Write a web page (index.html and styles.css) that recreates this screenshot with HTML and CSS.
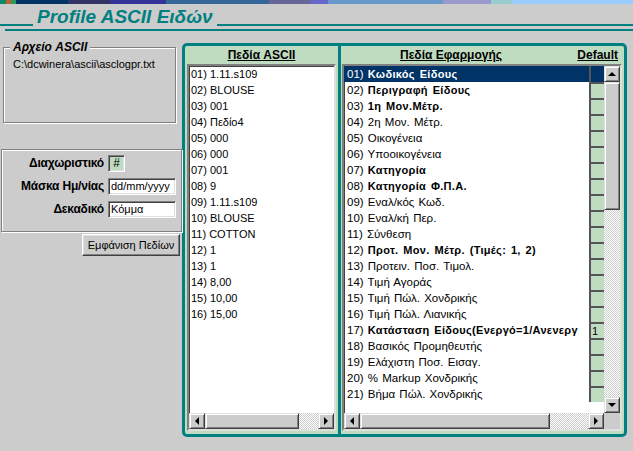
FILE: index.html
```html
<!DOCTYPE html>
<html lang="el">
<head>
<meta charset="utf-8">
<title>Profile ASCII Ειδών</title>
<link rel="stylesheet" href="styles.css">
</head>
<body>
<div class="titlebar"><span class="tb-icon"></span></div>
<header class="title-row">
  <span class="rule rule-left"></span>
  <h1 class="title">Profile ASCII Ειδών</h1>
  <span class="rule rule-right"></span>
</header>
<div class="title-rule2"></div>
<main class="main">
  <aside class="left-col">
    <section class="group group-file">
      <span class="group-legend">Αρχείο ASCII</span>
      <div class="file-path">C:\dcwinera\ascii\asclogpr.txt</div>
    </section>
    <section class="group group-opts">
      <span class="opt-label">Διαχωριστικό</span><div class="field field-sep">#</div>
      <span class="opt-label">Μάσκα Ημ/νίας</span><div class="field">dd/mm/yyyy</div>
      <span class="opt-label">Δεκαδικό</span><div class="field">Κόμμα</div>
    </section>
    <button class="btn">Εμφάνιση Πεδίων</button>
  </aside>
  <section class="panel">
    <div class="sub sub-ascii">
      <div class="sub-head head-center"><span class="hd">Πεδία ASCII</span></div>
      <div class="list list-ascii">
        <div class="rows">
          <div class="row">01) 1.11.s109</div>
          <div class="row">02) BLOUSE</div>
          <div class="row">03) 001</div>
          <div class="row">04) Πεδίο4</div>
          <div class="row">05) 000</div>
          <div class="row">06) 000</div>
          <div class="row">07) 001</div>
          <div class="row">08) 9</div>
          <div class="row">09) 1.11.s109</div>
          <div class="row">10) BLOUSE</div>
          <div class="row">11) COTTON</div>
          <div class="row">12) 1</div>
          <div class="row">13) 1</div>
          <div class="row">14) 8,00</div>
          <div class="row">15) 10,00</div>
          <div class="row">16) 15,00</div>
        </div>
        <div class="hscroll">
          <span class="sbtn"><i class="tri tri-left"></i></span>
          <span class="thumb thumb-ascii"></span>
          <span class="track"></span>
          <span class="sbtn"><i class="tri tri-right"></i></span>
        </div>
      </div>
    </div>
    <div class="divider"></div>
    <div class="sub sub-app">
      <div class="sub-head head-app"><span class="hd hd-app">Πεδία Εφαρμογής</span><span class="hd hd-default">Default</span></div>
      <div class="list list-app">
        <div class="rows">
          <div class="row sel">01) <b>Κωδικός Είδους</b></div>
          <div class="row">02) <b>Περιγραφή Είδους</b></div>
          <div class="row">03) <b>1η Μον.Μέτρ.</b></div>
          <div class="row">04) 2η Μον. Μέτρ.</div>
          <div class="row">05) Οικογένεια</div>
          <div class="row">06) Υποοικογένεια</div>
          <div class="row">07) <b>Κατηγορία</b></div>
          <div class="row">08) <b>Κατηγορία Φ.Π.Α.</b></div>
          <div class="row">09) Εναλ/κός Κωδ.</div>
          <div class="row">10) Εναλ/κή Περ.</div>
          <div class="row">11) Σύνθεση</div>
          <div class="row">12) <b>Προτ. Μον. Μέτρ. (Τιμές: 1, 2)</b></div>
          <div class="row">13) Προτειν. Ποσ. Τιμολ.</div>
          <div class="row">14) Τιμή Αγοράς</div>
          <div class="row">15) Τιμή Πώλ. Χονδρικής</div>
          <div class="row">16) Τιμή Πώλ. Λιανικής</div>
          <div class="row">17) <b>Κατάσταση Είδους(Ενεργό=1/Ανενεργ</b></div>
          <div class="row">18) Βασικός Προμηθευτής</div>
          <div class="row">19) Ελάχιστη Ποσ. Εισαγ.</div>
          <div class="row">20) % Markup Χονδρικής</div>
          <div class="row">21) Βήμα Πώλ. Χονδρικής</div>
        </div>
        <div class="cells">
          <div class="cell cell-sel"></div>
          <div class="cell"></div><div class="cell"></div><div class="cell"></div><div class="cell"></div>
          <div class="cell"></div><div class="cell"></div><div class="cell"></div><div class="cell"></div>
          <div class="cell"></div><div class="cell"></div><div class="cell"></div><div class="cell"></div>
          <div class="cell"></div><div class="cell"></div><div class="cell"></div>
          <div class="cell">1</div>
          <div class="cell"></div><div class="cell"></div><div class="cell"></div><div class="cell"></div>
        </div>
        <div class="vscroll">
          <span class="sbtn"><i class="tri tri-up"></i></span>
          <span class="thumb thumb-v"></span>
          <span class="track"></span>
          <span class="sbtn"><i class="tri tri-down"></i></span>
        </div>
        <div class="hscroll hscroll-app">
          <span class="sbtn"><i class="tri tri-left"></i></span>
          <span class="thumb thumb-app"></span>
          <span class="track"></span>
          <span class="sbtn"><i class="tri tri-right"></i></span>
        </div>
        <div class="corner"></div>
      </div>
    </div>
  </section>
</main>
</body>
</html>
```

FILE: styles.css
```css
* { box-sizing: border-box; }

html, body {
  margin: 0;
  padding: 0;
  background: #cccccc;
  font-family: "Liberation Sans", Arial, sans-serif;
  font-size: 11px;
  color: #000;
  width: 633px;
  height: 451px;
  overflow: hidden;
}

/* remnant of the window caption strip */
.titlebar {
  height: 4px;
  display: flex;
  background: linear-gradient(to right,
    #003366 0, #003366 68px,
    #333366 68px, #333366 110px,
    #333399 110px, #333399 166px,
    #336699 166px, #336699 269px,
    #666699 269px, #666699 311px,
    #6666cc 311px, #6666cc 328px,
    #6699cc 328px, #6699cc 443px,
    #9999cc 443px, #9999cc 491px,
    #99cccc 491px, #99cccc 512px,
    #99ccff 512px, #99ccff 633px);
}
.tb-icon {
  width: 16px;
  height: 4px;
  background: linear-gradient(to right, #0a8a6a 0 6px, #c06030 6px 11px, #2a9a5a 11px 16px);
}

.title-row {
  display: flex;
  align-items: flex-end;
  height: 22px;
}
.rule {
  height: 2px;
  background: #008080;
}
.rule-left { width: 33px; flex: none; }
.rule-right { flex: 1; }
.title {
  margin: 0 4px;
  font-family: "Liberation Sans", Arial, sans-serif;
  font-size: 19px;
  line-height: 19px;
  font-weight: bold;
  font-style: italic;
  color: #008080;
  white-space: nowrap;
}
.title-rule2 {
  margin: 3px 0 0 5px;
  height: 2px;
  background: #008080;
}

.main {
  display: flex;
  align-items: flex-start;
}

.left-col {
  width: 182px;
  flex: none;
  display: flex;
  flex-direction: column;
  align-items: flex-start;
}

.group {
  position: relative;
  border: 1px solid #808080;
  box-shadow: inset 1px 1px 0 #fff, 1px 1px 0 #fff;
}
.group-file {
  margin: 16px 0 0 3px;
  width: 173px;
  height: 76px;
  padding: 9px 0 0 9px;
}
.group-legend {
  position: absolute;
  top: -8px;
  left: 6px;
  padding: 0 3px;
  background: #cccccc;
  font-size: 12px;
  line-height: 14px;
  font-weight: bold;
  font-style: italic;
}
.file-path {
  font-size: 11px;
  line-height: 14px;
  white-space: nowrap;
}

.group-opts {
  margin: 26px 0 0 1px;
  width: 181px;
  height: 83px;
  padding: 5px 0 0 0;
  display: grid;
  grid-template-columns: 102px auto;
  grid-auto-rows: 17px;
  column-gap: 4px;
  row-gap: 6px;
  align-content: start;
  justify-items: start;
}
.opt-label {
  justify-self: end;
  font-size: 12px;
  font-weight: bold;
  line-height: 17px;
  white-space: nowrap;
  letter-spacing: -0.2px;
}
.field {
  width: 68px;
  height: 17px;
  background: #fff;
  border: 1px solid;
  border-color: #808080 #fff #fff #808080;
  box-shadow: inset 1px 1px 0 #404040, inset -1px -1px 0 #dfdfdf;
  padding: 0 0 0 2px;
  font-size: 11px;
  line-height: 15px;
  white-space: nowrap;
  overflow: hidden;
}
.field-sep {
  width: 17px;
  background: #c0dcc0;
  padding: 0;
  text-align: center;
  font-size: 12px;
}

.btn {
  margin: 2px 0 0 82px;
  width: 98px;
  height: 22px;
  padding: 0;
  background: #cccccc;
  border: 1px solid;
  border-color: #fff #404040 #404040 #fff;
  box-shadow: inset -1px -1px 0 #808080, inset 1px 1px 0 #dfdfdf;
  font-family: "Liberation Sans", Arial, sans-serif;
  font-size: 11px;
  color: #000;
}

/* right panel */
.panel {
  margin-top: 12px;
  width: 445px;
  height: 394px;
  flex: none;
  border: 3px solid #008080;
  border-radius: 5px;
  background: #c0dcc0;
  display: grid;
  grid-template-columns: 153px 3px 1fr;
}
.divider { background: #008080; }

.sub {
  display: flex;
  flex-direction: column;
  min-width: 0;
}
.sub-ascii { padding: 0 2px 3px 2px; }
.sub-app { padding: 0 2px 3px 1px; }

.sub-head {
  height: 18px;
  flex: none;
  display: flex;
  align-items: center;
  font-size: 12px;
  font-weight: bold;
}
.head-center { justify-content: center; }
.hd { text-decoration: underline; line-height: 14px; white-space: nowrap; }
.hd-app { margin-left: 58px; }
.hd-default { margin-left: auto; margin-right: 4px; }

.list {
  flex: 1;
  background: #fff;
  border: 2px solid;
  border-color: #808080 #dfdfdf #dfdfdf #808080;
  box-shadow: inset 1px 1px 0 #404040;
  min-height: 0;
}
.list-ascii {
  display: flex;
  flex-direction: column;
}
.list-ascii .rows {
  flex: 1;
  padding-left: 2px;
  overflow: hidden;
}
.row {
  height: 16px;
  line-height: 16px;
  white-space: nowrap;
  overflow: hidden;
}

.list-app {
  display: grid;
  grid-template-columns: 245px 15px 16px;
  grid-template-rows: 1fr 16px;
}
.list-app .rows { overflow: hidden; }
.list-app .row {
  padding-left: 3px;
  font-size: 11.5px;
  word-spacing: 1px;
}
.list-app .row b {
  font-size: 11px;
  letter-spacing: 0.3px;
  word-spacing: 1.5px;
}
.list-app .row.sel { background: #003366; color: #fff; }

.cells {
  display: flex;
  flex-direction: column;
  align-items: stretch;
}
.cell {
  height: 16px;
  flex: none;
  background: #c0dcc0;
  border-left: 2px solid #555;
  border-top: 2px solid #555;
  font-size: 11px;
  line-height: 14px;
  padding-left: 1px;
}
.cell:first-child { border-top: 0; height: 16px; }
.cell-sel { background: #003366; }

.vscroll {
  display: flex;
  flex-direction: column;
}
.hscroll {
  height: 16px;
  flex: none;
  display: flex;
}
.hscroll-app { grid-column: 1 / 3; }
.corner { background: #cccccc; }

.sbtn {
  width: 16px;
  height: 16px;
  flex: none;
  background: #cccccc;
  border: 1px solid;
  border-color: #dfdfdf #404040 #404040 #dfdfdf;
  box-shadow: inset 1px 1px 0 #fff, inset -1px -1px 0 #808080;
  display: flex;
  align-items: center;
  justify-content: center;
}
.thumb {
  flex: none;
  background: #cccccc;
  border: 1px solid;
  border-color: #dfdfdf #404040 #404040 #dfdfdf;
  box-shadow: inset 1px 1px 0 #fff, inset -1px -1px 0 #808080;
}
.thumb-ascii { width: 94px; }
.thumb-app { width: 190px; }
.thumb-v { height: 128px; }
.track {
  flex: 1;
  background: repeating-conic-gradient(#ffffff 0 25%, #cccccc 0 50%) 0 0 / 2px 2px;
}

.tri { display: block; width: 0; height: 0; }
.tri-up { border-left: 4px solid transparent; border-right: 4px solid transparent; border-bottom: 4px solid #000; }
.tri-down { border-left: 4px solid transparent; border-right: 4px solid transparent; border-top: 4px solid #000; }
.tri-left { border-top: 4px solid transparent; border-bottom: 4px solid transparent; border-right: 4px solid #000; }
.tri-right { border-top: 4px solid transparent; border-bottom: 4px solid transparent; border-left: 4px solid #000; }
```
